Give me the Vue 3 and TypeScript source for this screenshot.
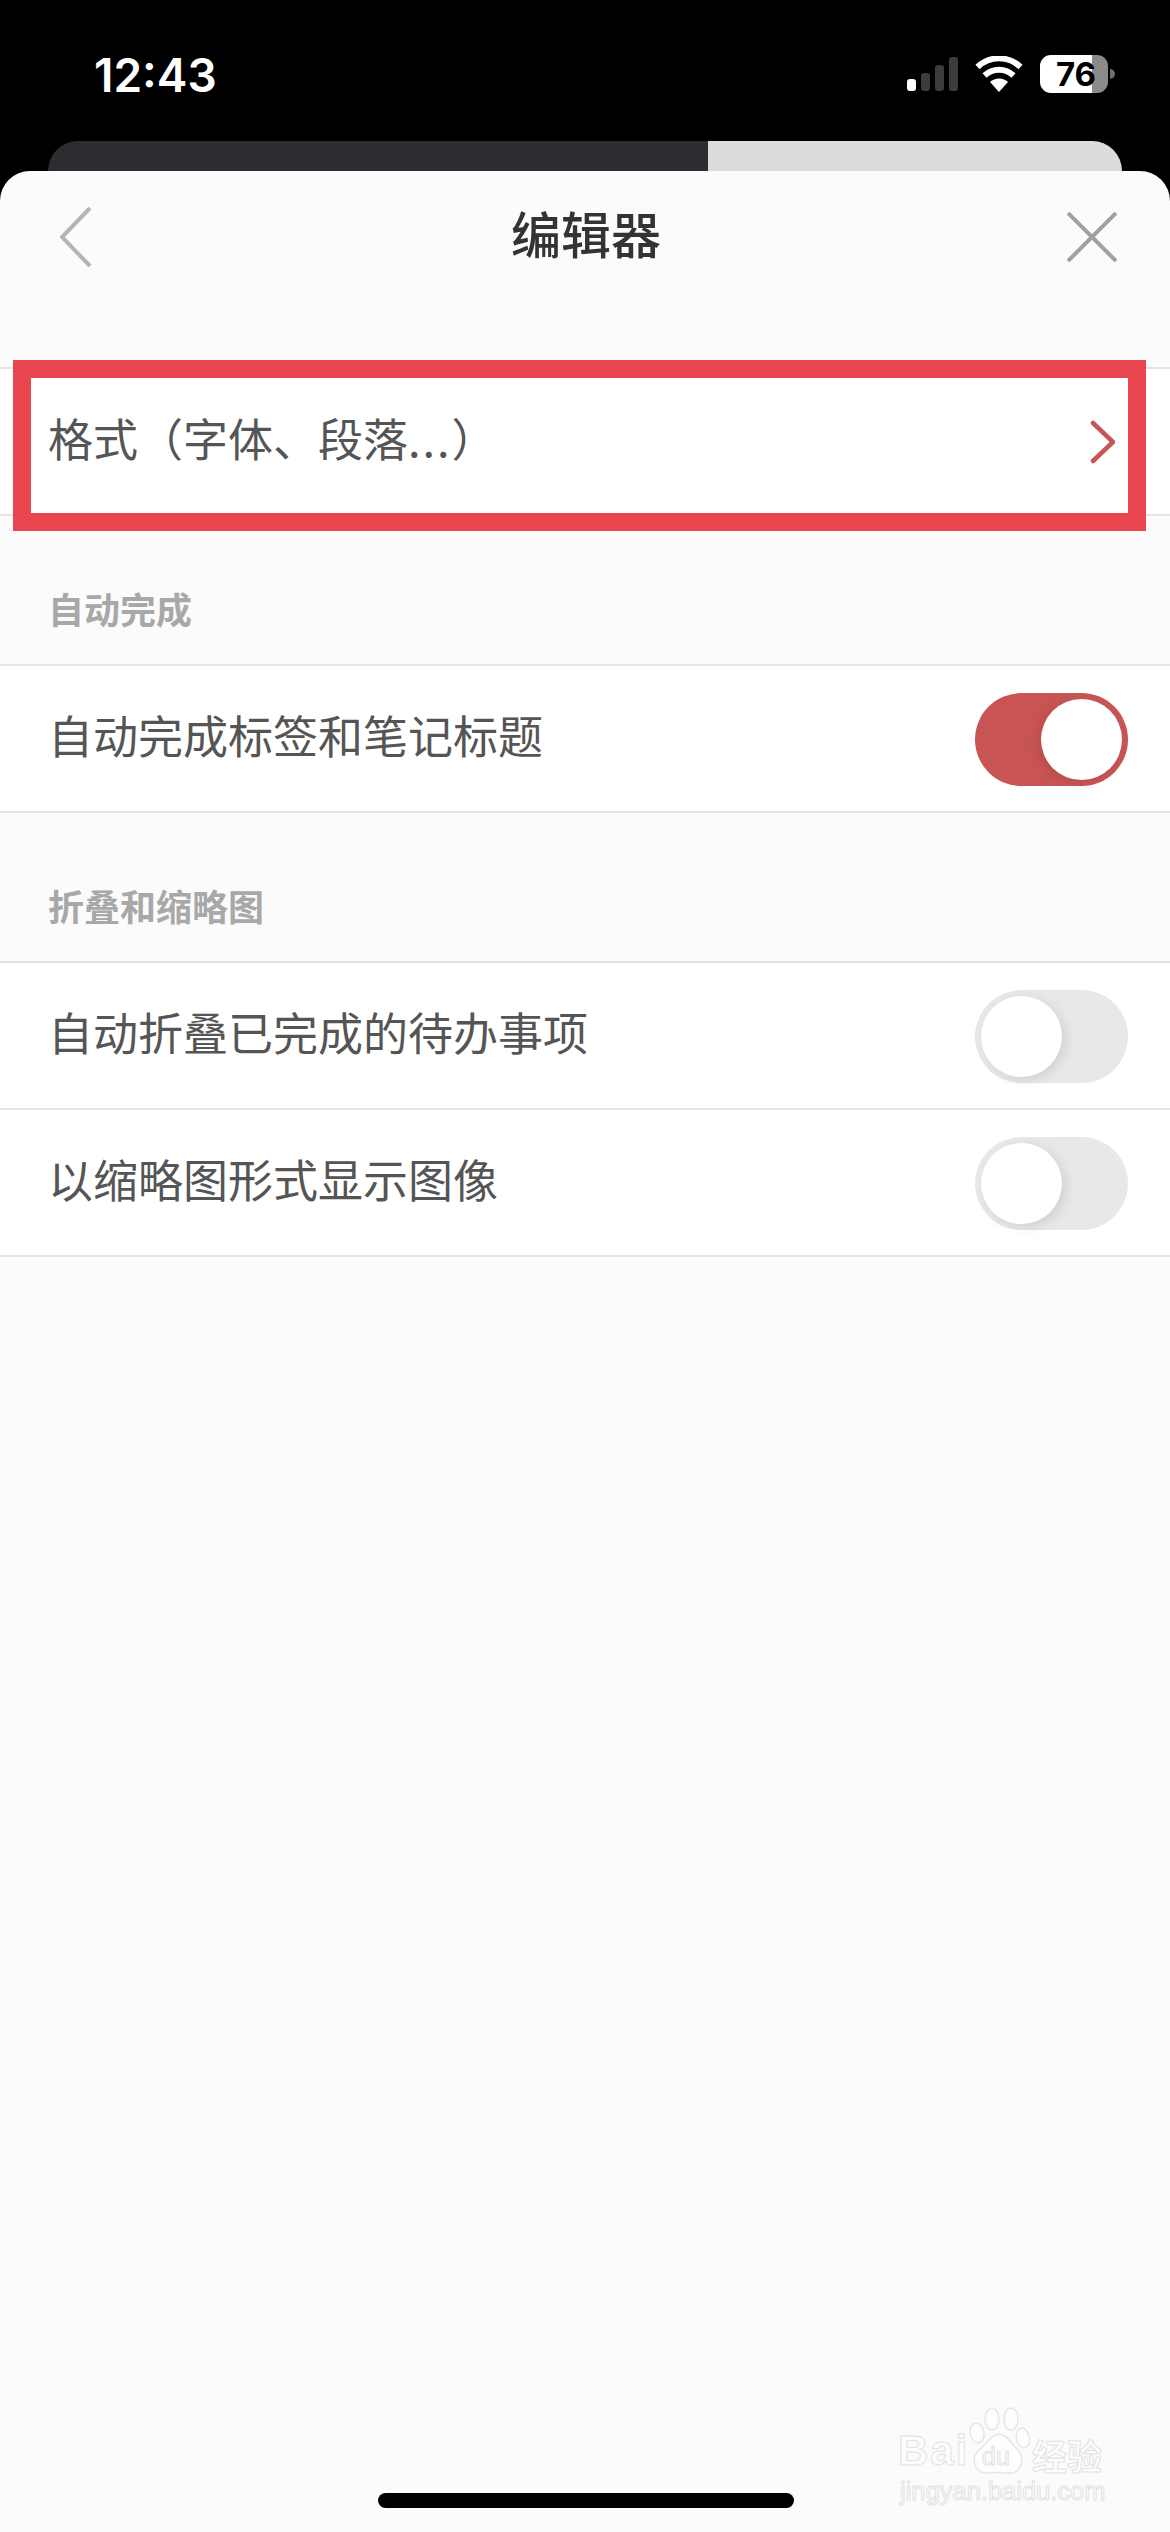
<script setup lang="ts">
interface Row {
  label: string
  on: boolean
}

const autoRows: Row[] = [{ label: '自动完成标签和笔记标题', on: true }]
const foldRows: Row[] = [
  { label: '自动折叠已完成的待办事项', on: false },
  { label: '以缩略图形式显示图像', on: false },
]
const signalBars = [12, 18, 26, 34]
</script>

<template>
  <div class="page">
    <header class="status">
      <span class="time">12:43</span>
      <div class="status-icons">
        <div class="signal">
          <i v-for="(h, idx) in signalBars" :key="idx" :class="{ lit: idx === 0 }" :style="{ height: h + 'px' }"></i>
        </div>
        <svg class="wifi" width="48" height="36" viewBox="0 0 48 36">
          <path d="M24 36 L15 26 A13 13 0 0 1 33 26 Z" fill="#fff" />
          <path d="M9.5 19.5 A21 21 0 0 1 38.5 19.5" fill="none" stroke="#fff" stroke-width="6" />
          <path d="M2.5 11 A31 31 0 0 1 45.500 11" fill="none" stroke="#fff" stroke-width="6" />
        </svg>
        <div class="battery">
          <div class="battery-body"><span>76</span></div>
          <div class="battery-tip"></div>
        </div>
      </div>
    </header>

    <div class="peek">
      <div class="peek-dark"></div>
      <div class="peek-light"></div>
    </div>

    <main class="sheet">
      <div class="nav">
        <svg class="back" width="32" height="60" viewBox="0 0 32 60">
          <path d="M30 1 L2 30 L30 59" fill="none" stroke="#b4b4b4" stroke-width="4" />
        </svg>
        <h1>编辑器</h1>
        <svg class="close" width="50" height="50" viewBox="0 0 50 50">
          <path d="M1 1 L49 49 M49 1 L1 49" fill="none" stroke="#a0a0a0" stroke-width="4" />
        </svg>
      </div>

      <section class="group first">
        <div class="row">
          <span class="row-label">格式（字体、段落<span class="dots">...</span>）</span>
          <svg width="25" height="44" viewBox="0 0 25 44">
            <path d="M3 3 L23 22 L3 41" fill="none" stroke="#c85554" stroke-width="4.500" stroke-linecap="round" />
          </svg>
          <div class="highlight"></div>
        </div>
      </section>

      <h2>自动完成</h2>
      <section class="group">
        <div v-for="row in autoRows" :key="row.label" class="row">
          <span class="row-label">{{ row.label }}</span>
          <div class="switch" :class="{ on: row.on }"><b></b></div>
        </div>
      </section>

      <h2>折叠和缩略图</h2>
      <section class="group">
        <div v-for="row in foldRows" :key="row.label" class="row">
          <span class="row-label">{{ row.label }}</span>
          <div class="switch" :class="{ on: row.on }"><b></b></div>
        </div>
      </section>

      <div class="home-bar"></div>

      <div class="watermark">
        <span class="wm-bai">Bai</span>
        <svg class="wm-paw" width="62" height="68" viewBox="0 0 62 68">
          <g fill="#fdfdfd" stroke="#e6e6e6" stroke-width="1.500">
            <ellipse cx="9" cy="26" rx="7" ry="10" transform="rotate(-12 9 26)" />
            <ellipse cx="24" cy="12" rx="7" ry="11" />
            <ellipse cx="43" cy="12" rx="7" ry="11" />
            <ellipse cx="55" cy="31" rx="6.500" ry="10" transform="rotate(-12 55 31)" />
            <path d="M31 27 C38 27 42 35 50 43 C58 53 52 66 42 66 C35 66 27 65 20 66 C9 67 2 55 9 45 C18 38 23 27 31 27 Z" />
          </g>
        </svg>
        <span class="wm-du">du</span>
        <span class="wm-cn">经验</span>
        <span class="wm-url">jingyan.baidu.com</span>
      </div>
    </main>
  </div>
</template>

<style scoped>
.page {
  position: relative;
  width: 1170px;
  height: 2532px;
  background: #000;
  overflow: hidden;
  font-family: "Noto Sans CJK SC", "Noto Sans", sans-serif;
}

.status {
  height: 141px;
  box-sizing: border-box;
  padding: 47px 55px 0 94px;
  display: flex;
  justify-content: space-between;
  align-items: flex-start;
}
.time {
  font-family: Inter, sans-serif;
  font-size: 46px;
  font-weight: 600;
  line-height: 56px;
  color: #fff;
}
.status-icons {
  display: flex;
  align-items: flex-start;
  margin-top: 8px;
}
.signal {
  display: flex;
  align-items: flex-end;
  gap: 5px;
  height: 34px;
  margin-top: 2px;
}
.signal i {
  display: block;
  width: 9px;
  border-radius: 3px;
  background: #3c3c3c;
}
.signal i.lit {
  background: #fff;
}
.wifi {
  margin-left: 17px;
  margin-top: 1px;
}
.battery {
  display: flex;
  align-items: center;
  margin-left: 17px;
}
.battery-body {
  width: 68px;
  height: 38px;
  border-radius: 11px;
  background: linear-gradient(to right, #fff 0, #fff 52px, #8a8a8a 52px);
  display: flex;
  align-items: center;
  justify-content: center;
  font-family: Inter, sans-serif;
  font-size: 33px;
  font-weight: 700;
  color: #000;
  line-height: 38px;
}
.battery-body span {
  margin-left: 4px;
}
.battery-tip {
  width: 5px;
  height: 10px;
  margin-left: 2px;
  border-radius: 0 5px 5px 0;
  background: #6e6e6e;
}

.peek {
  height: 30px;
  margin: 0 48px;
  display: flex;
  border-radius: 30px 30px 0 0;
  overflow: hidden;
}
.peek-dark {
  width: 660px;
  background: #2b2d30;
}
.peek-light {
  flex: 1;
  background: #dcdcdc;
}

.sheet {
  position: relative;
  height: 2361px;
  background: #fbfbfb;
  border-radius: 30px 30px 0 0;
  overflow: hidden;
}

.nav {
  height: 132px;
  display: flex;
  align-items: center;
  justify-content: space-between;
  padding: 0 53px 0 60px;
}
.nav h1 {
  margin: 0 0 10px 13px;
  font-size: 50px;
  font-weight: 500;
  color: #333;
  line-height: 60px;
}

.group {
  background: #fff;
  border-top: 2px solid #e4e4e4;
}
.group.first {
  margin-top: 64px;
}
.row {
  position: relative;
  height: 145px;
  border-bottom: 2px solid #e4e4e4;
  display: flex;
  align-items: center;
  justify-content: space-between;
  padding: 0 42px 0 48px;
  font-size: 45px;
  color: #555;
}
.row-label {
  padding-bottom: 8px;
}
.dots {
  letter-spacing: 2px;
}
.first .row {
  padding-right: 55px;
}

h2 {
  margin: 0;
  height: 148px;
  box-sizing: border-box;
  padding: 72px 0 0 48px;
  font-size: 36px;
  font-weight: 700;
  line-height: 40px;
  color: #a8a8a8;
}

.highlight {
  position: absolute;
  left: 13px;
  right: 24px;
  top: -9px;
  bottom: -17px;
  border: solid #e9464f;
  border-width: 18px;
  pointer-events: none;
}

.switch {
  position: relative;
  width: 153px;
  height: 93px;
  margin-top: 2px;
  border-radius: 47px;
  background: #e8e8e9;
}
.switch b {
  position: absolute;
  left: 6px;
  top: 6px;
  width: 81px;
  height: 81px;
  border-radius: 50%;
  background: #fff;
  box-shadow: 4px 3px 12px rgba(0, 0, 0, 0.1);
}
.switch.on {
  background: #c85554;
}
.switch.on b {
  left: 66px;
  box-shadow: -4px 3px 12px rgba(90, 20, 20, 0.12);
}

.home-bar {
  position: absolute;
  left: 378px;
  bottom: 24px;
  width: 416px;
  height: 15px;
  border-radius: 8px;
  background: #000;
}

.watermark {
  position: absolute;
  left: 890px;
  top: 2230px;
  width: 230px;
  height: 110px;
  color: #fdfdfd;
  -webkit-text-stroke: 1px #e2e2e2;
  font-family: "Liberation Sans", sans-serif;
}
.watermark span {
  position: absolute;
  white-space: nowrap;
}
.wm-bai {
  left: 8px;
  top: 30px;
  font-size: 42px;
  font-weight: 700;
  line-height: 40px;
  letter-spacing: 2px;
}
.wm-paw {
  position: absolute;
  left: 78px;
  top: 6px;
}
.wm-du {
  left: 92px;
  top: 40px;
  font-size: 25px;
  line-height: 30px;
}
.wm-cn {
  left: 142px;
  top: 34px;
  font-family: "Noto Sans CJK SC", sans-serif;
  font-size: 35px;
  font-weight: 700;
  line-height: 40px;
}
.wm-url {
  left: 10px;
  top: 75px;
  font-size: 25.500px;
  line-height: 30px;
}
</style>

<style>
html,
body {
  background: #000;
}
</style>
